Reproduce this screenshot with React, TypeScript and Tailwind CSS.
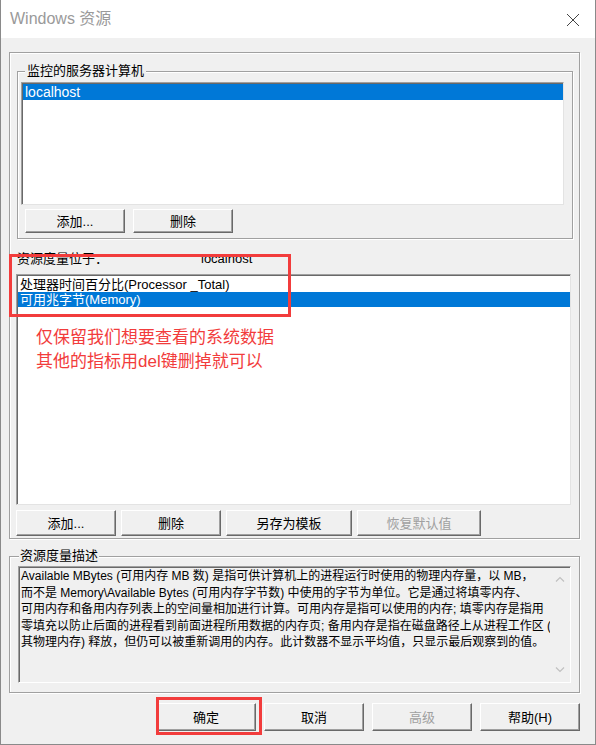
import React from "react";

const font = { fontFamily: '"Liberation Sans", "Noto Sans CJK SC", sans-serif' };

interface BtnProps {
  label: string;
  className?: string;
  disabled?: boolean;
}

const WinButton = ({ label, className, disabled }: BtnProps) => (
  <button
    className={
      "flex items-center justify-center bg-[#f0f0f0] border border-t-white border-l-white border-r-[#696969] border-b-[#696969] shadow-[inset_-1px_-1px_0_#a0a0a0] text-[13px] leading-none " +
      (disabled ? "text-[#a0a0a0] " : "text-black ") +
      (className ?? "")
    }
  >
    {label}
  </button>
);

// the text box wraps exactly like this in the original dialog
const descriptionLines = [
  "Available MBytes (可用内存 MB 数) 是指可供计算机上的进程运行时使用的物理内存量，以 MB，",
  "而不是 Memory\\Available Bytes (可用内存字节数) 中使用的字节为单位。它是通过将填零内存、",
  "可用内存和备用内存列表上的空间量相加进行计算。可用内存是指可以使用的内存; 填零内存是指用",
  "零填充以防止后面的进程看到前面进程所用数据的内存页; 备用内存是指在磁盘路径上从进程工作区 (",
  "其物理内存) 释放，但仍可以被重新调用的内存。此计数器不显示平均值，只显示最后观察到的值。",
];

export default function App() {
  return (
    <div
      style={font}
      className="relative w-[596px] h-[745px] overflow-hidden bg-[#f0f0f0] border-l border-b border-r border-[#8a8a8a]"
    >
      {/* title bar */}
      <div className="h-[38px] bg-white flex items-center justify-between pl-[9px] pr-[15px]">
        <span className="text-[16px] text-[#9a9a9a]">Windows 资源</span>
        <svg width="14" height="14" viewBox="0 0 14 14" className="mt-[1px]">
          <path d="M1 1 L13 13 M13 1 L1 13" stroke="#444" strokeWidth="1" fill="none" />
        </svg>
      </div>

      <div className="pt-[14px] pl-[8px]">
        {/* outer property page */}
        <div className="w-[571px] h-[487px] border border-[#a0a0a0] shadow-[1px_1px_0_#fff,inset_1px_1px_0_#fff]">
          {/* monitored computers group */}
          <div className="relative ml-[7px] mt-[18px] w-[556px] h-[168px] border border-[#a0a0a0] shadow-[1px_1px_0_#fff,inset_1px_1px_0_#fff]">
            <span className="absolute left-[7px] -top-[9px] px-[2px] bg-[#f0f0f0] text-[13px] leading-[16px]">
              监控的服务器计算机
            </span>
            <div className="ml-[3px] mt-[10px] w-[543px] h-[123px] bg-white border border-t-[#a0a0a0] border-l-[#a0a0a0] border-r-[#e3e3e3] border-b-[#e3e3e3] shadow-[inset_1px_1px_0_#696969]">
              <div className="mt-[1px] ml-[1px] h-[16px] bg-[#0078d7] text-white text-[14px] leading-[16px] pl-[2px]">
                localhost
              </div>
            </div>
            <div className="flex gap-[8px] ml-[7px] mt-[4px]">
              <WinButton label="添加..." className="w-[100px] h-[24px]" />
              <WinButton label="删除" className="w-[100px] h-[24px]" />
            </div>
          </div>

          {/* location row */}
          <div className="flex ml-[7px] mt-[12px] h-[16px] text-[13px] leading-[16px]">
            <span className="w-[184px]">资源度量位于：</span>
            <span>localhost</span>
          </div>

          {/* counters list */}
          <div className="ml-[6px] mt-[7px] w-[555px] h-[231px] bg-white border border-t-[#a0a0a0] border-l-[#a0a0a0] border-r-[#e3e3e3] border-b-[#e3e3e3] shadow-[inset_1px_1px_0_#696969] pt-[2px] pl-[1px] text-[13px] leading-[15px]">
            <div className="pl-[2px] h-[15px]">处理器时间百分比(Processor _Total)</div>
            <div className="pl-[2px] h-[15px] bg-[#0078d7] text-white">可用兆字节(Memory)</div>
          </div>

          <div className="flex gap-[5px] ml-[6px] mt-[5px]">
            <WinButton label="添加..." className="w-[100px] h-[26px]" />
            <WinButton label="删除" className="w-[100px] h-[26px]" />
            <WinButton label="另存为模板" className="w-[126px] h-[26px]" />
            <WinButton label="恢复默认值" className="w-[124px] h-[26px]" disabled />
          </div>
        </div>

        {/* description group */}
        <div className="relative mt-[17px] w-[571px] h-[137px] border border-[#a0a0a0] shadow-[1px_1px_0_#fff,inset_1px_1px_0_#fff]">
          <span className="absolute left-[9px] -top-[9px] px-[1px] bg-[#f0f0f0] text-[13px] leading-[16px]">
            资源度量描述
          </span>
          <div className="flex ml-[8px] mt-[9px] w-[553px] h-[117px] bg-[#f0f0f0] border border-t-[#a0a0a0] border-l-[#a0a0a0] border-r-white border-b-white shadow-[inset_1px_1px_0_#696969]">
            <div className="flex-1 overflow-hidden pl-[2px] pt-[1px] text-[12px] leading-[16.5px] text-black whitespace-nowrap">
              {descriptionLines.map((line) => (
                <div key={line}>{line}</div>
              ))}
            </div>
            <div className="w-[20px] flex flex-col items-center justify-between py-[9px]">
              <svg width="10" height="6" viewBox="0 0 10 6">
                <path d="M1 5.5 L5 1.5 L9 5.5" stroke="#c0c0c0" strokeWidth="1.2" fill="none" />
              </svg>
              <svg width="10" height="6" viewBox="0 0 10 6">
                <path d="M1 0.5 L5 4.5 L9 0.5" stroke="#c0c0c0" strokeWidth="1.2" fill="none" />
              </svg>
            </div>
          </div>
        </div>

        {/* dialog buttons */}
        <div className="flex justify-end gap-[8px] mt-[10px] pr-[15px]">
          <WinButton label="确定" className="w-[100px] h-[28px]" />
          <WinButton label="取消" className="w-[100px] h-[28px]" />
          <WinButton label="高级" className="w-[100px] h-[28px]" disabled />
          <WinButton label="帮助(H)" className="w-[100px] h-[28px]" />
        </div>
      </div>

      {/* red annotations */}
      <div className="absolute left-[8px] top-[254px] w-[282px] h-[63px] border-[3px] border-[#f23c3c]" />
      <div className="absolute left-[35px] top-[326px] text-[17px] leading-[24px] text-[#f23c3c]">
        <div>仅保留我们想要查看的系统数据</div>
        <div>其他的指标用del键删掉就可以</div>
      </div>
      <div className="absolute left-[155px] top-[697px] w-[106px] h-[38px] border-[3px] border-[#f23c3c]" />
    </div>
  );
}
